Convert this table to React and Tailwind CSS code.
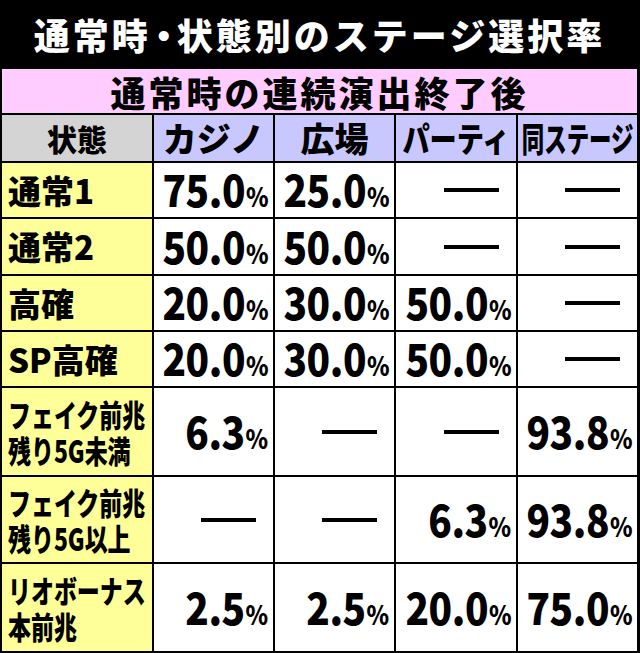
import React from "react";

const JP = { fontFamily: '"Noto Sans CJK JP", "Noto Sans", sans-serif' };

const rows = [
  { label: ["通常1"], h: "h-[54px]", vals: ["75.0", "25.0", null, null] },
  { label: ["通常2"], h: "h-[55px]", vals: ["50.0", "50.0", null, null] },
  { label: ["高確"], h: "h-[54px]", vals: ["20.0", "30.0", "50.0", null] },
  { label: ["SP高確"], h: "h-[54px]", vals: ["20.0", "30.0", "50.0", null] },
  { label: ["フェイク前兆", "残り5G未満"], h: "h-[87px]", vals: ["6.3", null, null, "93.8"] },
  { label: ["フェイク前兆", "残り5G以上"], h: "h-[85px]", vals: [null, null, "6.3", "93.8"] },
  { label: ["リオボーナス", "本前兆"], h: "h-[87px]", vals: ["2.5", "2.5", "20.0", "75.0"] },
];

const cols = "grid grid-cols-[150px_119px_119px_120px_119px] gap-[2px]";

function Val({ v }) {
  if (v === null) {
    return (
      <div className="flex h-full items-center justify-end bg-white pr-[17px]">
        <span className="block h-[4px] w-[55px] bg-black" aria-label="―"></span>
      </div>
    );
  }
  return (
    <div className="flex h-full items-center justify-end bg-white pb-[4px] pr-[5px]">
      <span className="flex origin-right scale-x-[0.88] items-baseline font-black text-black">
        <span className="text-[44px] leading-none tracking-[-0.5px]">{v}</span>
        <span className="ml-[1px] text-[26px] leading-none">%</span>
      </span>
    </div>
  );
}

export default function App() {
  return (
    <div
      className="flex h-[653px] w-[640px] flex-col gap-[2px] bg-black pb-[2px] pl-[2px] pr-[3px] font-black text-black"
      style={JP}
    >
      <div className="flex h-[67px] items-center justify-center text-[36px] leading-none tracking-[3px] text-white">
        <span>通常時</span>
        <span className="inline-flex w-[26px] justify-center tracking-normal">・</span>
        <span>状態別のステージ選択率</span>
      </div>
      <div className="flex h-[44px] items-center justify-center bg-[#ffccff] text-[35px] leading-none tracking-[3px]">
        通常時の連続演出終了後
      </div>
      <div className={`${cols} h-[46px]`}>
        <div className="flex items-center justify-center bg-[#d4d4d4] text-[30px] leading-none">状態</div>
        <div className="flex items-center justify-center bg-[#c8c8ff] text-[34px] leading-none">カジノ</div>
        <div className="flex items-center justify-center bg-[#c8c8ff] text-[34px] leading-none">広場</div>
        <div className="flex items-center justify-center bg-[#c8c8ff] text-[34px] leading-none">
          <span className="inline-block shrink-0 scale-x-[0.8] whitespace-nowrap">パーティ</span>
        </div>
        <div className="flex items-center justify-center bg-[#c8c8ff] text-[34px] leading-none">
          <span className="inline-block shrink-0 scale-x-[0.66] whitespace-nowrap">同ステージ</span>
        </div>
      </div>
      {rows.map((r, i) => (
        <div key={i} className={`${cols} ${r.h}`}>
          <div className="flex flex-col items-start justify-center bg-[#ffff99] pl-[6px]">
            {r.label.length === 1 ? (
              <span className="whitespace-nowrap text-[33px] leading-none">{r.label[0]}</span>
            ) : (
              r.label.map((l, j) => (
                <span
                  key={j}
                  className="inline-block origin-left scale-x-[0.74] whitespace-nowrap text-[31px] leading-[36px]"
                >
                  {l}
                </span>
              ))
            )}
          </div>
          {r.vals.map((v, j) => (
            <Val key={j} v={v} />
          ))}
        </div>
      ))}
    </div>
  );
}
